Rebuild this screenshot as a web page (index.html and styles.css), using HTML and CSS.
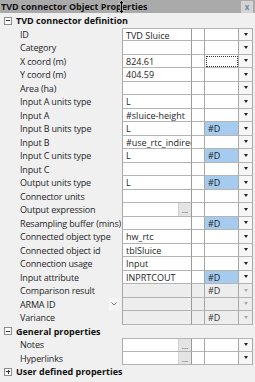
FILE: index.html
```html
<!DOCTYPE html>
<html lang="en">
<head>
    <meta charset="utf-8" />
    <link rel="stylesheet" href="styles.css">
    <title>TVD connector Object Properties</title>
</head>
<body>
<div class="panel">
    <div class="titlebar">
        <span class="title">TVD connector Object Properties</span>
        <svg class="cursor" width="7" height="14" viewBox="0 0 7 14">
            <path d="M3.5 0.5 L6.5 3.5 L4.5 3.5 L4.5 10.5 L6.5 10.5 L3.5 13.5 L0.5 10.5 L2.5 10.5 L2.5 3.5 L0.5 3.5 Z" fill="#000" stroke="#fff" stroke-width="0.6"/>
        </svg>
        <span class="close">x</span>
    </div>

    <div class="section"><span class="toggle minus"></span>TVD connector definition</div>
    <div class="row first"><span class="label">ID</span><span class="val">TVD Sluice</span><span class="mid"></span><span class="combo"></span><span class="btn"><i class="arrow"></i></span></div>
    <div class="row"><span class="label">Category</span><span class="val"></span><span class="mid"></span><span class="combo"></span><span class="btn"><i class="arrow"></i></span></div>
    <div class="row"><span class="label">X coord (m)</span><span class="val">824.61</span><span class="mid"></span><span class="combo focus"></span><span class="btn"><i class="arrow"></i></span></div>
    <div class="row"><span class="label">Y coord (m)</span><span class="val">404.59</span><span class="mid"></span><span class="combo"></span><span class="btn"><i class="arrow"></i></span></div>
    <div class="row"><span class="label">Area (ha)</span><span class="val"></span><span class="mid"></span><span class="combo"></span><span class="btn"><i class="arrow"></i></span></div>
    <div class="row"><span class="label">Input A units type</span><span class="val">L</span><span class="mid"></span><span class="combo"></span><span class="btn"><i class="arrow"></i></span></div>
    <div class="row"><span class="label">Input A</span><span class="val">#sluice-height</span><span class="mid"></span><span class="combo"></span><span class="btn"><i class="arrow"></i></span></div>
    <div class="row"><span class="label">Input B units type</span><span class="val">L</span><span class="mid"></span><span class="combo blue">#D</span><span class="btn"><i class="arrow"></i></span></div>
    <div class="row"><span class="label">Input B</span><span class="val">#use_rtc_indirect</span><span class="mid"></span><span class="combo"></span><span class="btn"><i class="arrow"></i></span></div>
    <div class="row"><span class="label">Input C units type</span><span class="val">L</span><span class="mid"></span><span class="combo blue">#D</span><span class="btn"><i class="arrow"></i></span></div>
    <div class="row"><span class="label">Input C</span><span class="val"></span><span class="mid"></span><span class="combo"></span><span class="btn"><i class="arrow"></i></span></div>
    <div class="row"><span class="label">Output units type</span><span class="val">L</span><span class="mid"></span><span class="combo blue">#D</span><span class="btn"><i class="arrow"></i></span></div>
    <div class="row"><span class="label">Connector units</span><span class="val"></span><span class="mid"></span><span class="combo"></span><span class="btn"><i class="arrow"></i></span></div>
    <div class="row"><span class="label">Output expression</span><span class="val"><span class="txt"></span><span class="dots">...</span></span><span class="mid"></span><span class="combo"></span><span class="btn"><i class="arrow"></i></span></div>
    <div class="row"><span class="label">Resampling buffer (mins)</span><span class="val"></span><span class="mid"></span><span class="combo blue">#D</span><span class="btn"><i class="arrow"></i></span></div>
    <div class="row"><span class="label">Connected object type</span><span class="val">hw_rtc</span><span class="mid"></span><span class="combo"></span><span class="btn"><i class="arrow"></i></span></div>
    <div class="row"><span class="label">Connected object id</span><span class="val">tblSluice</span><span class="mid"></span><span class="combo"></span><span class="btn"><i class="arrow"></i></span></div>
    <div class="row"><span class="label">Connection usage</span><span class="val">Input</span><span class="mid"></span><span class="combo"></span><span class="btn"><i class="arrow"></i></span></div>
    <div class="row"><span class="label">Input attribute</span><span class="val">INPRTCOUT</span><span class="mid"></span><span class="combo blue">#D</span><span class="btn"><i class="arrow"></i></span></div>
    <div class="row off"><span class="label">Comparison result</span><span class="val"></span><span class="mid"></span><span class="combo">#D</span><span class="btn"><i class="arrow"></i></span></div>
    <div class="row off"><span class="label">ARMA ID<span class="chev"><svg width="6" height="4" viewBox="0 0 6 4"><path d="M0.5 0.5 L3 3 L5.5 0.5" fill="none" stroke="#777" stroke-width="1"/></svg></span></span><span class="val"></span><span class="mid"></span><span class="combo"></span><span class="btn"><i class="arrow"></i></span></div>
    <div class="row off"><span class="label">Variance</span><span class="val"></span><span class="mid"></span><span class="combo">#D</span><span class="btn"><i class="arrow"></i></span></div>

    <div class="section"><span class="toggle minus"></span>General properties</div>
    <div class="row first"><span class="label">Notes</span><span class="val"><span class="txt"></span><span class="dots">...</span></span><span class="mid"></span><span class="combo"></span><span class="btn"><i class="arrow"></i></span></div>
    <div class="row"><span class="label">Hyperlinks</span><span class="val"><span class="txt"></span><span class="dots">...</span></span><span class="mid"></span><span class="combo"></span><span class="btn"><i class="arrow"></i></span></div>

    <div class="section"><span class="toggle plus"></span>User defined properties</div>
</div>
</body>
</html>
```

FILE: styles.css
```css
*{margin:0;padding:0;box-sizing:border-box;}
body{background:#f0f0f0;font:9px/13.5px "Open Sans","Noto Sans",sans-serif;color:#1e1e28;}
.panel{width:255px;height:382px;overflow:hidden;background:#f0f0f0;}

.titlebar{position:relative;display:flex;align-items:center;height:13px;background:#aaaaaa;margin-bottom:1px;}
.titlebar .title{flex:1;font-weight:700;color:#141414;padding-left:1px;white-space:nowrap;line-height:13px;}
.titlebar .cursor{position:absolute;left:118px;top:0;}
.titlebar .close{width:12px;height:12px;margin-right:2px;background:#d4d4d4;color:#6f8aa6;font-weight:700;font-size:8px;line-height:12px;text-align:center;}

.section{display:flex;align-items:center;height:13.5px;font-weight:700;color:#111;white-space:nowrap;}
.toggle{position:relative;width:8px;height:8px;margin:0 4px 0 4px;border:1px solid #8c8c8c;background:#fff;}
.toggle::before{content:"";position:absolute;left:1px;top:2.5px;width:4px;height:1px;background:#333;}
.toggle.plus::after{content:"";position:absolute;left:2.5px;top:1px;width:1px;height:4px;background:#333;}

.row{display:grid;grid-template-columns:122px 70px 13px 34px 14px;height:13.5px;white-space:nowrap;}
.row > span{overflow:hidden;}
.row > .label{display:flex;padding-left:20px;padding-right:3px;overflow:visible;letter-spacing:-0.16px;}
.row .val,.row .mid,.row .combo,.row .btn{background:#fff;border-bottom:1px solid #b4b4b4;border-right:1px solid #a8a8a8;}
.row .val{display:flex;border-left:1px solid #a8a8a8;padding-left:3px;border-right-color:#9a9a9a;}
.row.first .val,.row.first .mid,.row.first .combo,.row.first .btn{border-top:1px solid #b4b4b4;}
.row .combo{padding-left:3px;}
.row .combo.blue{background:#a5cbef;}
.row .combo.focus{outline:1px dotted #333;outline-offset:-2px;}
.row .btn{display:flex;align-items:center;justify-content:center;background:#f6f6f6;}
.arrow{width:0;height:0;border-left:2.5px solid transparent;border-right:2.5px solid transparent;border-top:3px solid #222;}

.txt{flex:1;}
.dots{width:13px;background:#e4e4e4;border-left:1px solid #d0d0d0;text-align:center;font-size:8px;line-height:14px;color:#333;}

.row.off .val,.row.off .mid,.row.off .combo,.row.off .btn{background:#ededed;}
.row.off .combo{color:#333;}
.row.off .arrow{border-top-color:#a8a8a8;}
.chev{display:flex;align-items:center;justify-content:center;width:10px;margin-left:auto;background:#f6f6f6;}
```
